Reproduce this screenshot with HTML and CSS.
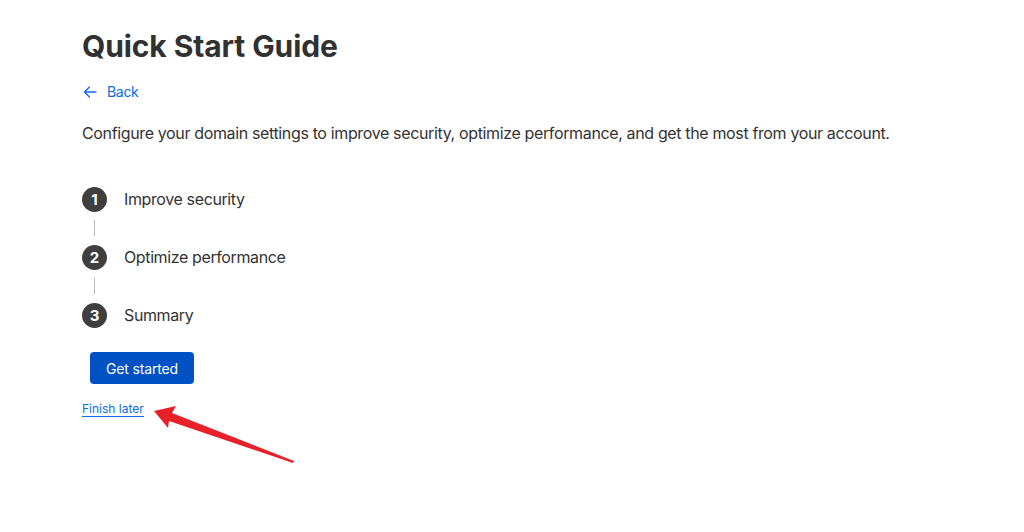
FILE: index.html
```html
<!DOCTYPE html>
<html>
<head>
    <title>Quick Start Guide</title>
    <link rel="stylesheet" href="styles.css">
</head>
<body>
    <div class="page">
        <h1>Quick Start Guide</h1>

        <a class="back" href="#">
            <svg width="14" height="14" viewBox="0 0 14 14" fill="none" stroke="currentColor" stroke-width="1.3" stroke-linecap="round" stroke-linejoin="round">
                <path d="M13 7H1.5M6.5 2L1.5 7l5 5"/>
            </svg>
            <span>Back</span>
        </a>

        <p class="intro">Configure your domain settings to improve security, optimize performance, and get the most from your account.</p>

        <!-- Steps -->
        <ol class="steps">
            <li class="step"><span class="num">1</span><span class="label">Improve security</span></li>
            <li class="line"></li>
            <li class="step"><span class="num">2</span><span class="label">Optimize performance</span></li>
            <li class="line"></li>
            <li class="step"><span class="num">3</span><span class="label">Summary</span></li>
        </ol>

        <button class="start">Get started</button>
        <div><a class="later" href="#">Finish later</a></div>
    </div>

    <!-- annotation arrow -->
    <svg class="annot" width="1024" height="532" viewBox="0 0 1024 532">
        <polygon fill="#e8202a" points="154,411 176,406 172,413 294,461 293,463 169,421 168,428"/>
    </svg>
</body>
</html>
```

FILE: styles.css
```css
body { margin: 0; font-family: Inter, "Noto Sans", sans-serif; color: #333; background: #fff; }
.page { padding: 26px 82px; }
h1 { margin: 0; font-size: 30px; font-weight: 700; line-height: 40px; color: #313131; letter-spacing: -0.1px; }
.back { display: inline-flex; align-items: center; gap: 10px; margin-top: 17px; color: #0a6ee8; text-decoration: none; font-size: 14px; line-height: 18px; letter-spacing: -0.3px; }
.back svg { margin-left: 1px; }
.intro { margin: 18px 0 0; font-size: 16px; line-height: 24px; color: #333; letter-spacing: -0.36px; }
.steps { list-style: none; margin: 41px 0 0; padding: 0; }
.step { display: flex; align-items: center; gap: 17px; height: 26px; }
.num { width: 25px; height: 25px; border-radius: 50%; background: #3f3f3f; color: #fff; font-size: 15px; font-weight: 700; display: flex; align-items: center; justify-content: center; }
.label { font-size: 16px; color: #333; letter-spacing: -0.38px; }
.line { width: 1px; height: 16px; margin: 8px 0 8px 12px; background: #b8b8b8; }
.start { margin: 24px 0 0 8px; width: 104px; height: 32px; border: 0; border-radius: 4px; background: #0051c3; color: #fff; font-family: inherit; font-size: 14px; letter-spacing: -0.15px; cursor: pointer; }
.later { display: inline-block; margin-top: 17px; font-size: 12px; line-height: 15px; color: #0a6ee8; text-decoration: none; border-bottom: 1px solid #0a6ee8; }
.annot { position: absolute; left: 0; top: 0; pointer-events: none; }
```
